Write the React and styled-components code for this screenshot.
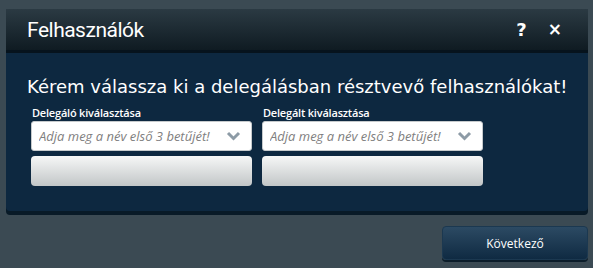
import React from "react";
import styled, { createGlobalStyle } from "styled-components";

const GlobalStyle = createGlobalStyle`
  html, body {
    margin: 0;
    padding: 0;
    background: #3b4a53;
  }
  body {
    font-family: "Open Sans", "DejaVu Sans", sans-serif;
  }
`;

const Page = styled.div`
  width: 593px;
  height: 268px;
  padding: 9px 5px 0 6px;
  box-sizing: border-box;
  display: flex;
  flex-direction: column;
`;

const Dialog = styled.section`
  width: 582px;
  background: #0d2840;
  border-radius: 0 0 4px 4px;
  box-shadow: 0 4px 0 #081a27;
`;

const Header = styled.header`
  height: 41px;
  display: flex;
  align-items: center;
  padding: 0 26px 0 21px;
  background: linear-gradient(#2b3a43, #0f1b22);
  border-bottom: 3px solid #06131d;
`;

const Title = styled.h1`
  flex: 1;
  margin: 0;
  font-family: Roboto, sans-serif;
  font-size: 21px;
  font-weight: 400;
  color: #fff;
  letter-spacing: -0.5px;
  line-height: 1;
  padding-top: 1px;
`;

const HeaderButton = styled.button`
  border: 0;
  background: none;
  padding: 0;
  margin-left: ${(p) => p.$gap || 0}px;
  color: #fff;
  font-family: "DejaVu Sans", sans-serif;
  font-weight: 700;
  font-size: ${(p) => p.$size || 16}px;
  line-height: 1;
  cursor: pointer;
`;

const Body = styled.div`
  padding: 24px 10px 25px 21px;
`;

const Heading = styled.h2`
  margin: 0 0 8px 0;
  font-family: "DejaVu Sans", sans-serif;
  font-size: 18px;
  line-height: 20px;
  font-weight: 400;
  color: #fff;
  white-space: nowrap;
`;

const Columns = styled.div`
  display: grid;
  grid-template-columns: 221px 221px;
  gap: 10px;
  padding-left: 4px;
`;

const Field = styled.div`
  display: flex;
  flex-direction: column;
`;

const Label = styled.label`
  font-family: "Open Sans", sans-serif;
  font-size: 11px;
  font-weight: 600;
  letter-spacing: -0.2px;
  color: #fff;
  margin: 0 0 1px 1px;
  line-height: 15px;
`;

const Combo = styled.div`
  height: 30px;
  box-sizing: border-box;
  background: #fff;
  border: 1px solid #c6cacc;
  border-radius: 3px;
  display: flex;
  align-items: center;
  padding: 0 10px 0 7px;
`;

const Input = styled.input`
  flex: 1;
  min-width: 0;
  border: 0;
  outline: none;
  padding: 0;
  background: transparent;
  font-family: "Open Sans", sans-serif;
  font-style: italic;
  font-size: 13px;
  color: #555;
  &::placeholder {
    color: #7f8080;
  }
`;

const ListBox = styled.div`
  height: 30px;
  margin-top: 5px;
  border-radius: 4px;
  background: linear-gradient(#f6f7f7, #c2c6c7);
`;

const Footer = styled.div`
  display: flex;
  justify-content: flex-end;
  margin-top: 15px;
`;

const NextButton = styled.button`
  width: 146px;
  height: 34px;
  border: 1px solid #1b3850;
  border-radius: 4px;
  background: linear-gradient(#2c4a63, #0f2a42);
  box-shadow: 0 2px 0 #0c1d2a;
  color: #fff;
  font-family: "Open Sans", sans-serif;
  font-size: 12px;
  cursor: pointer;
`;

const Chevron = () => (
  <svg width="15" height="10" viewBox="0 0 15 10">
    <path d="M2 2l5.5 5.5L13 2" fill="none" stroke="#8d9ba6" strokeWidth="3" />
  </svg>
);

const fields = ["Delegáló kiválasztása", "Delegált kiválasztása"];

export default function App() {
  return (
    <Page>
      <GlobalStyle />
      <Dialog>
        <Header>
          <Title>Felhasználók</Title>
          <HeaderButton $size={18}>?</HeaderButton>
          <HeaderButton $gap={21} $size={17}>×</HeaderButton>
        </Header>
        <Body>
          <Heading>Kérem válassza ki a delegálásban résztvevő felhasználókat!</Heading>
          <Columns>
            {fields.map((f) => (
              <Field key={f}>
                <Label>{f}</Label>
                <Combo>
                  <Input placeholder="Adja meg a név első 3 betűjét!" />
                  <Chevron />
                </Combo>
                <ListBox />
              </Field>
            ))}
          </Columns>
        </Body>
      </Dialog>
      <Footer>
        <NextButton>Következő</NextButton>
      </Footer>
    </Page>
  );
}
